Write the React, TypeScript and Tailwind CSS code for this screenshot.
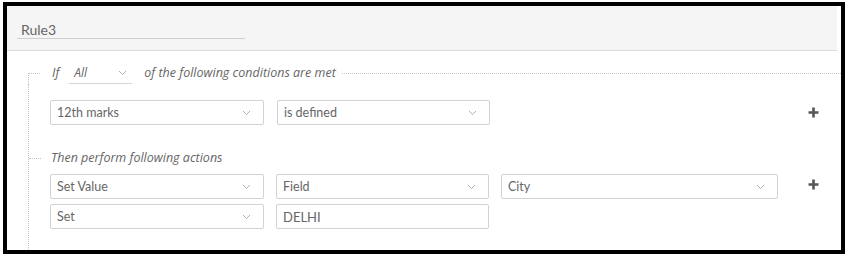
import React from "react";

const font = { fontFamily: '"Open Sans", "Liberation Sans", sans-serif' };
const boxFont = { fontFamily: 'Lato, "Open Sans", sans-serif' };

function Chevron() {
  return (
    <svg width="9" height="6" viewBox="0 0 9 6" className="shrink-0">
      <path d="M1 1 L4.5 4.5 L8 1" fill="none" stroke="#b0b0b0" strokeWidth="1" />
    </svg>
  );
}

function Plus() {
  return (
    <svg width="11" height="11" viewBox="0 0 11 11" className="shrink-0">
      <path d="M5.5 0.5 V10.5 M0.5 5.5 H10.5" stroke="#555" strokeWidth="2.6" />
    </svg>
  );
}

function SelectBox({ label, width }: { label: string; width: string }) {
  return (
    <div
      className={`${width} h-[25px] flex items-center justify-between border border-[#d2d2d2] rounded-[2px] bg-white pl-[6px] pr-[12px] text-[12.5px] text-[#666]`}
      style={boxFont}
    >
      <span className="pt-[2px]">{label}</span>
      <Chevron />
    </div>
  );
}

function InputBox({ value, width }: { value: string; width: string }) {
  return (
    <div
      className={`${width} h-[25px] flex items-center border border-[#d2d2d2] rounded-[2px] bg-white pl-[6px] text-[13px] text-[#666]`}
      style={boxFont}
    >
      <span className="pt-[2px]">{value}</span>
    </div>
  );
}

export default function App() {
  return (
    <div className="w-[847px] h-[259px] bg-white pt-[2px] pl-[3px]" style={font}>
      <div className="w-[842px] h-[252px] border-4 border-black flex flex-col bg-white">
        {/* rule name header */}
        <div className="h-[45px] mr-[4px] bg-[#f5f5f5] border-b border-[#dcdcdc] pl-[10px] pt-[15px]">
          <div
            className="w-[228px] h-[18px] border-b border-[#cfcfcf] pl-[4px] pt-[1px] text-[14px] leading-[16px] text-[#666]"
            style={boxFont}
          >
            Rule3
          </div>
        </div>

        {/* conditions legend */}
        <div className="flex items-center h-[22px] mt-[11px] pl-[21px]">
          <div className="w-[12px] h-[11px] self-end border-t border-l border-dotted border-[#c4c4c4]" />
          <span className="ml-[12px] italic text-[12.5px] text-[#666]">If</span>
          <div className="ml-[10px] w-[63px] h-[22px] flex items-center justify-between border-b border-[#d6d6d6] pl-[5px] pr-[5px] text-[12px] italic text-[#666]">
            <span>All</span>
            <Chevron />
          </div>
          <span className="ml-[12px] italic text-[12.5px] text-[#666]">
            of the following conditions are met
          </span>
          <div className="flex-1 ml-[6px] border-t border-dotted border-[#c4c4c4]" />
        </div>

        {/* body */}
        <div className="flex-1 ml-[21px] border-l border-dotted border-[#c4c4c4] flex flex-col">
          <div className="flex items-center mt-[16px] pl-[21px] pr-[22px]">
            <SelectBox label="12th marks" width="w-[214px]" />
            <div className="ml-[13px]">
              <SelectBox label="is defined" width="w-[213px]" />
            </div>
            <div className="ml-auto">
              <Plus />
            </div>
          </div>

          <div className="flex items-center h-[20px] mt-[23px]">
            <div className="w-[12px] border-t border-dotted border-[#c4c4c4]" />
            <span className="ml-[10px] italic text-[12.5px] text-[#666]">
              Then perform following actions
            </span>
          </div>

          <div className="flex items-start mt-[6px] pl-[21px] pr-[22px]">
            <SelectBox label="Set Value" width="w-[214px]" />
            <div className="ml-[12px]">
              <SelectBox label="Field" width="w-[213px]" />
            </div>
            <div className="ml-[12px]">
              <SelectBox label="City" width="w-[277px]" />
            </div>
            <div className="ml-auto pt-[5px]">
              <Plus />
            </div>
          </div>

          <div className="flex items-center mt-[5px] pl-[21px]">
            <SelectBox label="Set" width="w-[214px]" />
            <div className="ml-[12px]">
              <InputBox value="DELHI" width="w-[213px]" />
            </div>
          </div>
        </div>
      </div>
    </div>
  );
}
